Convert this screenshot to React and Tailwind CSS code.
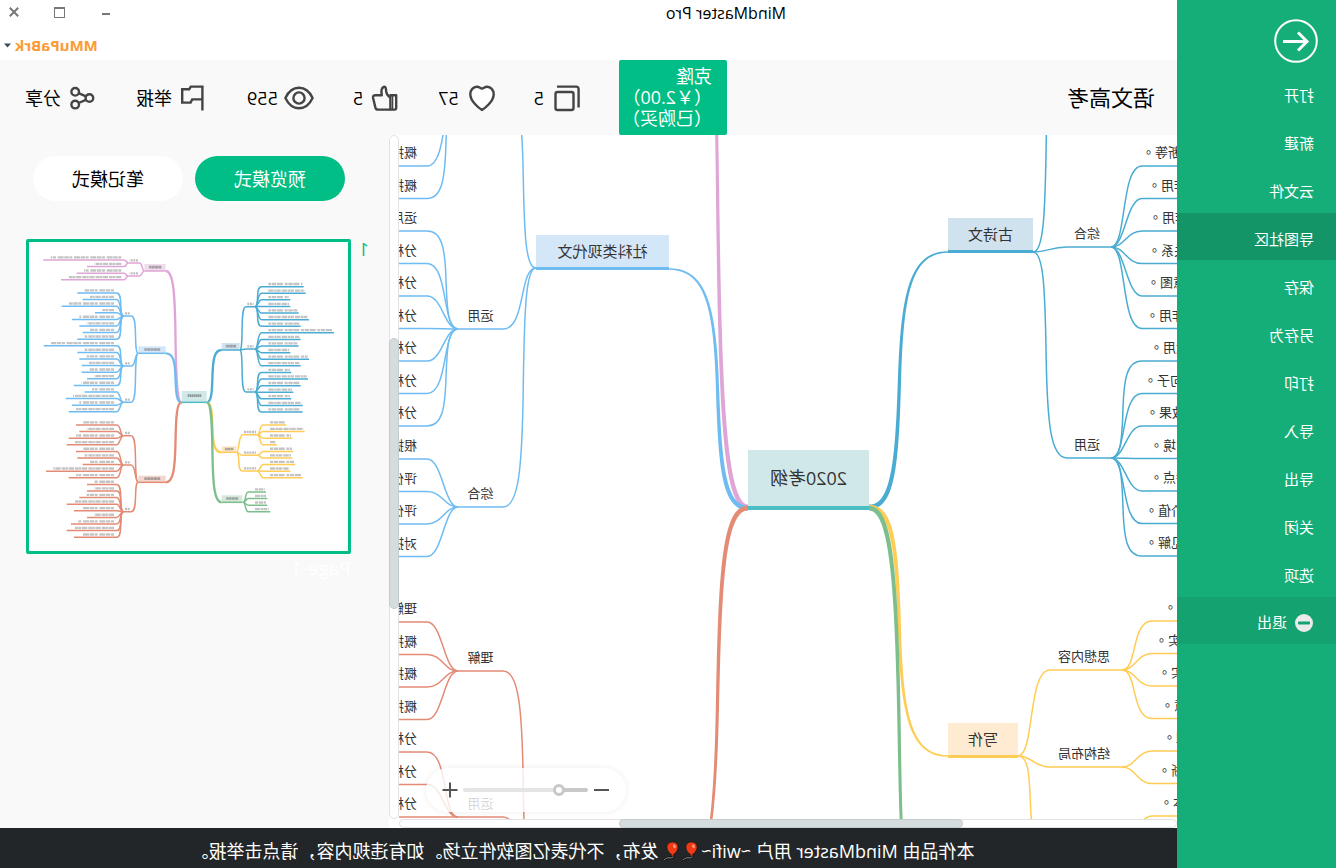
import React from "react";

/* ---------- curve helpers ---------- */

// S-shaped connector between two points, given as one or two cubic segments.
// The steeper the connector, the squarer its bends.
function segments(x1, y1, x2, y2) {
  const p = (fx, fy) => [x1 + (x2 - x1) * fx, y1 + (y2 - y1) * fy];
  const slope = Math.abs((y2 - y1) / (x2 - x1 || 1));
  if (slope < 1.6) return [[p(0, 0), p(0.45, 0), p(0.5, 1), p(1, 1)]];
  if (slope < 2.8) return [[p(0, 0), p(0.52, 0), p(0.3, 1), p(1, 1)]];
  return [
    [p(0, 0), p(0.304, 0), p(0.354, 0.168), p(0.386, 0.5)],
    [p(0.386, 0.5), p(0.418, 0.832), p(0.52, 1), p(1, 1)],
  ];
}

function curve(x1, y1, x2, y2) {
  const segs = segments(x1, y1, x2, y2);
  return `M${segs[0][0]}` + segs.map((s) => `C${s[1]} ${s[2]} ${s[3]}`).join("");
}

// The same connector as an outline whose width runs from w1 to w2.
function taper(x1, y1, x2, y2, w1, w2) {
  const left = [];
  const right = [];
  const segs = segments(x1, y1, x2, y2);
  segs.forEach(([a, b, c, d], s) => {
    for (let i = 0; i <= 24; i++) {
      const t = i / 24;
      const u = 1 - t;
      const at = (k) => u * u * u * a[k] + 3 * u * u * t * b[k] + 3 * u * t * t * c[k] + t * t * t * d[k];
      const dt = (k) => u * u * (b[k] - a[k]) + 2 * u * t * (c[k] - b[k]) + t * t * (d[k] - c[k]);
      const len = Math.hypot(dt(0), dt(1)) || 1;
      const half = (w1 + (w2 - w1) * ((s + t) / segs.length)) / 2;
      const nx = (-dt(1) / len) * half;
      const ny = (dt(0) / len) * half;
      left.push([at(0) + nx, at(1) + ny]);
      right.unshift([at(0) - nx, at(1) - ny]);
    }
  });
  return `M${left.concat(right).join("L")}Z`;
}

/* ---------- mind map data ---------- */

const COLORS = {
  teal: "#4aacd2",
  sky: "#6fbcf2",
  coral: "#e38b75",
  pink: "#dfa5d6",
  amber: "#ffcc55",
  green: "#7dbf8c",
};

const TRUNKS = [
  { color: COLORS.pink, to: [508, -266], from: [429, 372] },
  { color: COLORS.sky, to: [508, 134], from: [429, 373] },
  { color: COLORS.coral, to: [508, 762], from: [429, 373] },
  { color: COLORS.teal, to: [229, 117], from: [308, 372] },
  { color: COLORS.amber, to: [229, 621], from: [308, 372] },
  { color: COLORS.green, to: [229, 860], from: [308, 373] },
];

// box: the topic's outer end; x: near and far end of the sub-topic line; leafX: where leaves start
const BRANCHES = [
  {
    color: COLORS.sky, box: [641, 133], x: [674, 719], leafX: 750, edge: 790,
    subs: [
      { y: -50, label: "", first: 31, leaves: ["概括", "概括"] },
      { y: 194, label: "运用", first: 96, leaves: ["运用", "分析", "分析", "分析", "分析", "分析", "分析"] },
      { y: 372, label: "综合", first: 324, leaves: ["根据", "评价", "评价", "对提"] },
    ],
  },
  {
    color: COLORS.coral, box: [641, 762], x: [674, 719], leafX: 750, edge: 790,
    subs: [
      { y: 536, label: "理解", first: 487, leaves: ["理解", "概括", "概括", "概括"] },
      { y: 682, label: "运用", first: 617, leaves: ["分析", "分析", "分析"] },
    ],
  },
  {
    color: COLORS.teal, box: [144, 117], x: [110, 66], leafX: 35, edge: -10, inward: true,
    subs: [
      { y: -93, label: "", first: 0, leaves: [] },
      {
        y: 112, label: "综合", first: 31,
        leaves: [["断等", 35], ["作用", 29], ["作用", 28], ["关系", 29], ["意图", 30], ["作用", 31]],
      },
      {
        y: 323, label: "运用", first: 226,
        leaves: [["运用", 27], ["句子", 33], ["效果", 31], ["意境", 27], ["特点", 27], ["价值", 32], ["见解", 32]],
      },
    ],
  },
  {
    color: COLORS.amber, box: [159, 621], x: [127, 55], leafX: 25, edge: -10, inward: true,
    subs: [
      { y: 535, label: "思想内容", first: 486, leaves: [["", 13], ["实", 22], ["实", 19], ["意", 16]] },
      { y: 632, label: "结构布局", first: 616, leaves: [["理", 14], ["晰", 19]] },
      { y: 714, label: "", first: 681, leaves: [["本", 17]] },
    ],
  },
];

const TOPICS = [
  { label: "古诗文", x: 144, y: 83, w: 85, h: 35, fill: "#d1e2ef", line: COLORS.teal },
  { label: "社科类现代文", x: 508, y: 100, w: 133, h: 35, fill: "#d4e7f9", line: COLORS.sky },
  { label: "写作", x: 159, y: 588, w: 70, h: 35, fill: "#ffebd1", line: COLORS.amber },
];

function MindMap() {
  const strokes = [];
  const labels = [];
  BRANCHES.forEach((b, bi) => {
    b.subs.forEach((s, si) => {
      const key = `${bi}-${si}`;
      strokes.push(
        <path key={key} stroke={b.color} d={`${curve(b.box[0], b.box[1], b.x[0], s.y)}H${b.x[1]}`} />
      );
      if (s.label) {
        labels.push(
          <div
            key={key}
            className="absolute -translate-x-1/2 text-[13px] leading-4 whitespace-nowrap"
            style={{ left: (b.x[0] + b.x[1]) / 2 + (b.inward ? 2 : 0), top: s.y - 22 }}
          >
            {s.label}
          </div>
        );
      }
      s.leaves.forEach((leaf, li) => {
        const y = s.first + li * 32.5;
        strokes.push(
          <path key={`${key}-${li}`} stroke={b.color} d={`${curve(b.x[1], s.y, b.leafX, y)}H${b.edge}`} />
        );
        labels.push(
          b.inward ? (
            <div
              key={`${key}-${li}`}
              className="absolute flex w-20 -translate-x-full justify-end text-[13px] leading-4 whitespace-nowrap"
              style={{ left: leaf[1], top: y - 22 }}
            >
              {leaf[0]}
              <span lang="zh-TW" className="font-['Noto_Sans_CJK_TC',sans-serif]">。</span>
            </div>
          ) : (
            <div
              key={`${key}-${li}`}
              className="absolute text-[13px] leading-4 whitespace-nowrap"
              style={{ left: 760, top: y - 22 }}
            >
              {leaf}
            </div>
          )
        );
      });
    });
  });

  return (
    <div className="absolute inset-0 overflow-hidden text-[#333]">
      <svg className="absolute top-0 left-0" width="778" height="684" fill="none" strokeWidth="1.5">
        {strokes}
        {TRUNKS.map((t) => (
          <path key={t.color} fill={t.color} d={taper(...t.from, ...t.to, 4.8, 1.6)} />
        ))}
      </svg>
      {labels}
      {TOPICS.map((t) => (
        <div
          key={t.label}
          className="absolute flex items-center justify-center border-b-[3px] text-[15px] leading-none"
          style={{ left: t.x, top: t.y, width: t.w, height: t.h, background: t.fill, borderColor: t.line }}
        >
          {t.label}
        </div>
      ))}
      <div className="absolute top-[315px] left-[308px] flex h-[60px] w-[121px] items-center justify-center border-b-4 border-[#4bbdc5] bg-[#d1e8e9] text-lg">
        2020考纲
      </div>
    </div>
  );
}

/* ---------- page preview ---------- */

const PREVIEW = [
  {
    color: COLORS.pink, fill: "#f1dcee", dir: 1, box: [547, 66, 64, 21], sub: [626, 659], leafX: 672, start: 54,
    subs: [[63, [242, 111]], [102, [142, 189]]],
  },
  {
    color: COLORS.sky, fill: "#d4e7f9", dir: 1, box: [547, 313, 82, 21], sub: [651, 674], leafX: 694, start: 153,
    subs: [
      [222, [118, 102, 165, 65, 134, 112, 102, 118]],
      [372, [219, 118, 112, 105, 105, 89, 129]],
      [481, [96, 153, 134, 144]],
    ],
  },
  {
    color: COLORS.coral, fill: "#f3d6cf", dir: 1, box: [547, 701, 82, 20], sub: [651, 674], leafX: 694, start: 549,
    subs: [
      [581, [122, 112, 144, 150]],
      [669, [122, 118, 102, 212, 144]],
      [809, [89, 89, 112, 150, 128, 89, 137, 150, 128]],
    ],
  },
  {
    color: COLORS.teal, fill: "#d1e2ef", dir: -1, box: [325, 303, 54, 21], sub: [306, 279], leafX: 259, start: 134,
    subs: [
      [194, [126, 132, 86, 86, 111, 142, 117]],
      [321, [217, 117, 111, 86, 142, 117]],
      [450, [89, 139, 117, 95, 89, 123, 123]],
    ],
  },
  {
    color: COLORS.amber, fill: "#ffe3c8", dir: -1, box: [335, 613, 44, 18], sub: [316, 272], leafX: 254, start: 549,
    subs: [[578, [69, 124, 87, 41]], [640, [90, 87]], [687, [96, 81, 118]]],
  },
  {
    color: COLORS.green, fill: "#d5e8da", dir: -1, box: [317, 760, 62, 21], sub: [317, 314], leafX: 299, start: 750,
    subs: [[781, [53, 57, 57, 66]]],
  },
];

function Preview() {
  return (
    <svg className="block h-auto w-full" viewBox="0 0 957 927" fill="none" strokeWidth="4.5">
      <rect x="12" y="8" width="934" height="908" fill="#fff" />
      {PREVIEW.map((b) => {
        const [x, y, w, h] = b.box;
        const base = y + h;
        const near = b.dir > 0 ? x : x + w;
        const far = b.dir > 0 ? x + w : x;
        const rootX = b.dir > 0 ? 499 : 424;
        let n = 0;
        return (
          <g key={b.color} stroke={b.color}>
            <path strokeWidth="7" d={curve(rootX, 481, near, base)} />
            {b.subs.map(([sy, lengths], i) => (
              <g key={i}>
                <path d={`${curve(far, base, b.sub[0], sy)}H${b.sub[1]}`} />
                {b.sub[0] !== far && (
                  <path
                    stroke="#8a8a8a" strokeOpacity="0.55" strokeWidth="7" strokeDasharray="6 2"
                    d={`M${b.sub[0] + 4 * b.dir} ${sy - 8}H${b.sub[1] - 4 * b.dir}`}
                  />
                )}
                {lengths.map((len, j) => {
                  const ly = b.start + n++ * 19.8;
                  const end = b.leafX + len * b.dir;
                  return (
                    <g key={j}>
                      <path d={`${curve(b.sub[1], sy, b.leafX, ly)}H${end}`} />
                      <path
                        stroke="#8a8a8a" strokeOpacity="0.5" strokeWidth="7"
                        strokeDasharray={j % 2 ? "16 2 7 1 11 3" : "9 2 13 2 18 5"}
                        d={`M${b.leafX + (b.dir > 0 ? 8 : -20)} ${ly - 8}H${end + (b.dir > 0 ? -22 : 4)}`}
                      />
                    </g>
                  );
                })}
              </g>
            ))}
            <rect x={x} y={y} width={w} height={h} fill={b.fill} stroke="none" />
            <path d={`M${x} ${base}H${x + w}`} />
            <path
              stroke="#777" strokeOpacity="0.6" strokeWidth="8" strokeDasharray="9 1"
              d={`M${x + w * 0.2} ${y + h / 2 - 1}H${x + w * 0.78}`}
            />
          </g>
        );
      })}
      <rect x="424" y="447" width="75" height="34" fill="#d1e8e9" />
      <path stroke="#4bbdc5" d="M424 481H499" />
      <path stroke="#666" strokeOpacity="0.6" strokeWidth="8" strokeDasharray="5 1" d="M440 461H481" />
    </svg>
  );
}

/* ---------- icons ---------- */

function Icon({ children }) {
  return (
    <svg
      className="shrink-0" width="30" height="30" viewBox="0 0 30 30" fill="none"
      stroke="#444" strokeWidth="2.4" strokeLinejoin="round" aria-hidden="true"
    >
      {children}
    </svg>
  );
}

const STATS = [
  {
    name: "copy", text: "5",
    icon: (
      <>
        <rect x="6.5" y="9" width="18" height="18" rx="2" />
        <path d="M23 3.6H4Q1.4 3.6 1.4 6.4V24.5" />
      </>
    ),
  },
  {
    name: "like", text: "57",
    icon: (
      <path
        fill="#fff"
        d="M13 27C10.5 25.6 1.3 18.5 1.3 11.2C1.3 6.8 4.4 4 7.8 3.7C10 3.5 11.4 5.4 13 5.6C14.6 5.4 16 3.5 18.2 3.7C21.6 4 24.7 6.8 24.7 11.2C24.7 18.5 15.5 25.6 13 27Z"
      />
    ),
  },
  {
    name: "thumb", text: "5",
    icon: (
      <>
        <path d="M2.8 12.2H8.6V26.6H4.2Q2.8 26.6 2.8 25Z" />
        <path d="M6.4 12.5V26" strokeWidth="1.4" />
        <path d="M8.8 14.5C12 12.3 13 10.2 13 6.8C13 4.4 14 3.4 15.2 3.8C17.8 5 18 8.3 17.2 12.2H24Q26.4 12.4 25.9 15L23.6 24.6Q23 26.6 21 26.6H8.6" />
      </>
    ),
  },
  {
    name: "views", text: "559",
    icon: (
      <>
        <path d="M1.4 15C4.5 8.4 9.3 4.8 15 4.8S25.5 8.4 28.6 15C25.5 21.6 20.7 25.2 15 25.2S4.5 21.6 1.4 15Z" />
        <circle cx="15" cy="15" r="5.6" />
      </>
    ),
  },
  {
    name: "report", text: "举报",
    icon: <path strokeLinejoin="miter" d="M5.6 27.5V3.6H17.2L18.8 6.2H25.8V19.6H17.4L15.8 16.4H5.6" />,
  },
  {
    name: "share", text: "分享",
    icon: (
      <>
        <circle cx="7.6" cy="15" r="3.8" />
        <circle cx="21.8" cy="8.8" r="3.8" />
        <circle cx="21.8" cy="21.6" r="3.8" />
        <path d="M11 13.4L18.4 10.2M11 16.8L18.4 20" />
      </>
    ),
  },
];

function Balloon() {
  return (
    <svg className="inline-block align-[-3px]" width="19" height="20" viewBox="0 0 19 20" fill="none" aria-hidden="true">
      <path d="M9.5 13.5C10 16 7.5 15.5 9.5 16.5S14 15.5 18 18.8" stroke="#111" strokeWidth="2.6" />
      <path d="M9.5 13.5C10 16 7.5 15.5 9.5 16.5S14 15.5 18 18.8" stroke="#999" strokeWidth="0.9" />
      <path d="M9.5 1C13.4 1 15.4 3.8 15 7C14.6 10 12.2 12.6 10.4 13.4L11.2 15H7.8L8.6 13.4C6.8 12.6 4.4 10 4 7C3.6 3.8 5.6 1 9.5 1Z" fill="#f03a17" stroke="#111" strokeWidth="0.6" />
      <ellipse cx="7.6" cy="5.2" rx="1.3" ry="2" fill="#ff9a7c" transform="rotate(25 7.6 5.2)" />
    </svg>
  );
}

const MENU = ["打开", "新建", "云文件", "导图社区", "保存", "另存为", "打印", "导入", "导出", "关闭", "选项"];

/* ---------- page ---------- */

function Sidebar() {
  return (
    <nav className="flex w-[159px] shrink-0 flex-col bg-[#15ae79] text-[15px] text-white">
      <div className="flex h-[69px] items-start pt-[19px] pl-[18px]">
        <button type="button" aria-label="返回">
          <svg width="44" height="44" viewBox="0 0 44 44" fill="none" stroke="#fff" aria-hidden="true">
            <circle cx="22" cy="22" r="20.8" strokeWidth="2" />
            <path d="M35 22.5H11M20 13.5L11 22.5L20 31.5" strokeWidth="3" />
          </svg>
        </button>
      </div>
      {MENU.map((item) => (
        <button
          key={item}
          type="button"
          className={
            item === "导图社区"
              ? "mb-px flex h-[47px] items-center bg-[#139568] pt-1.5 pl-[22px] text-left"
              : "mb-px flex h-[47px] items-center pt-1.5 pl-[22px] text-left"
          }
        >
          {item}
        </button>
      ))}
      <button type="button" className="flex h-[47px] items-center gap-2 bg-[#14a370] pt-1 pl-[23px] text-left">
        <svg width="18" height="18" viewBox="0 0 18 18" aria-hidden="true">
          <circle cx="9" cy="9" r="9" fill="#ebebeb" />
          <rect x="3" y="7.5" width="12" height="3" rx="0.8" fill="#14a370" />
        </svg>
        退出
      </button>
    </nav>
  );
}

function TitleBar() {
  return (
    <header className="flex h-[60px] flex-col bg-white">
      <div className="flex h-7 items-center">
        <h1 className="flex-1 pb-0.5 pl-[137px] text-center text-base text-black">MindMaster Pro</h1>
        <div className="flex w-[412px] items-center justify-end gap-[18px] text-[#777]">
          <button type="button" aria-label="最小化" className="flex h-6 w-7 items-center justify-center">
            <span className="h-[2px] w-2 bg-current" />
          </button>
          <button type="button" aria-label="最大化" className="flex h-6 w-7 items-center justify-center pb-1">
            <span className="h-[11px] w-[11px] border border-t-2 border-current" />
          </button>
          <button type="button" aria-label="关闭窗口" className="flex h-6 w-7 items-center justify-center pb-1">
            <svg width="10" height="10" viewBox="0 0 10 10" stroke="currentColor" strokeWidth="2" aria-hidden="true">
              <path d="M0.8 0.8L9.2 9.2M9.2 0.8L0.8 9.2" />
            </svg>
          </button>
        </div>
      </div>
      <button type="button" className="flex h-8 items-center gap-1 self-end pt-0.5 pr-1 text-[15px] font-bold text-[#fc9a35]">
        MMuPaBrk
        <svg width="7" height="5" viewBox="0 0 7 5" fill="#3d4a5c" aria-hidden="true">
          <path d="M0 0.5H7L3.5 4.5Z" />
        </svg>
      </button>
    </header>
  );
}

function Toolbar() {
  return (
    <div className="flex h-[75px] items-center bg-[#f9f9f9] pr-[25px] text-black">
      <h2 className="flex-1 pl-[22px] text-[22px]">语文高考</h2>
      <button
        type="button"
        className="h-full w-[108px] shrink-0 rounded-[2px] bg-[#00be85] pl-[15px] text-left text-lg leading-[21px] whitespace-nowrap text-white"
      >
        克隆
        <br />
        （￥2.00）
        <br />
        （已购买）
      </button>
      <div className="ml-[39px] flex items-center gap-[39px] text-lg">
        {STATS.map((s) => (
          <button key={s.name} type="button" aria-label={s.name} className="flex items-center gap-1.5">
            <Icon>{s.icon}</Icon>
            {s.text}
          </button>
        ))}
      </div>
    </div>
  );
}

function ZoomBar() {
  return (
    <div className="absolute bottom-[7px] left-[551px] flex h-11 w-[200px] items-center justify-between rounded-full bg-white/80 px-4 text-[#555] shadow-[0_0_6px_rgba(0,0,0,0.08)]">
      <button type="button" aria-label="缩小" className="flex h-4 w-4 items-center justify-center">
        <span className="h-[2px] w-[15px] bg-current" />
      </button>
      <input
        type="range"
        aria-label="缩放"
        defaultValue="21"
        className="h-1 w-[125px] appearance-none rounded-full bg-[linear-gradient(to_right,#c8c8c8_24%,#e5e5e5_24%)] [&::-webkit-slider-thumb]:h-3 [&::-webkit-slider-thumb]:w-3 [&::-webkit-slider-thumb]:appearance-none [&::-webkit-slider-thumb]:rounded-full [&::-webkit-slider-thumb]:border-[3px] [&::-webkit-slider-thumb]:border-solid [&::-webkit-slider-thumb]:border-[#c8c8c8] [&::-webkit-slider-thumb]:bg-white"
      />
      <button type="button" aria-label="放大" className="flex h-4 w-4 items-center justify-center">
        <svg width="16" height="16" viewBox="0 0 16 16" stroke="currentColor" strokeWidth="2" aria-hidden="true">
          <path d="M0.5 8H15.5M8 0.5V15.5" />
        </svg>
      </button>
    </div>
  );
}

function Pages() {
  return (
    <aside className="w-[389px] shrink-0 bg-[#f9f9f9]">
      <div className="flex gap-3 pt-[21px] pl-11 text-lg">
        <button type="button" className="h-[45px] w-[150px] rounded-full bg-[#00be85] text-white">
          预览模式
        </button>
        <button type="button" className="h-[45px] w-[150px] rounded-full bg-white text-black">
          笔记模式
        </button>
      </div>
      <div className="flex pt-[38px] text-lg">
        <div className="w-[38px] pl-5 leading-5 text-[#00be85]">1</div>
        <div className="w-[325px]">
          <div className="rounded-[2px] border-[3px] border-[#00be85] bg-[#fdfdfd]">
            <Preview />
          </div>
          <div className="text-[19px] leading-7 text-white">Page-1</div>
        </div>
      </div>
    </aside>
  );
}

export default function App() {
  return (
    <div
      lang="zh-CN"
      className="flex h-screen -scale-x-100 overflow-hidden bg-white font-['Open_Sans','Noto_Sans_CJK_SC',sans-serif]"
    >
      <Sidebar />
      <main className="flex min-w-0 flex-1 flex-col">
        <TitleBar />
        <Toolbar />
        <div className="flex min-h-0 flex-1">
          <section className="flex min-w-0 flex-1 flex-col bg-white">
            <div className="flex min-h-0 flex-1">
              <div className="relative min-w-0 flex-1">
                <MindMap />
                <ZoomBar />
              </div>
              <div className="w-[10px] rounded-full border border-[#e2e2e2] bg-white">
                <div className="mt-[202px] -mr-px -ml-px h-[271px] rounded-full border border-[#c3cbcc] bg-[#d4dcdd]" />
              </div>
            </div>
            <div className="mr-[10px] h-[9px] rounded-full border border-[#e2e2e2] bg-white">
              <div className="-mt-px ml-[213px] h-[9px] w-[344px] rounded-full border border-[#c3cbcc] bg-[#d4dcdd]" />
            </div>
          </section>
          <Pages />
        </div>
        <footer className="flex h-10 items-center justify-center bg-[#232628] pt-1.5 pl-3 text-lg text-white">
          <p className="whitespace-nowrap">
            本作品由 MindMaster 用户 ~wifi~
            <Balloon />
            <Balloon /> 发布，不代表亿图软件立场。如有违规内容，请点击举报。
          </p>
        </footer>
      </main>
    </div>
  );
}
